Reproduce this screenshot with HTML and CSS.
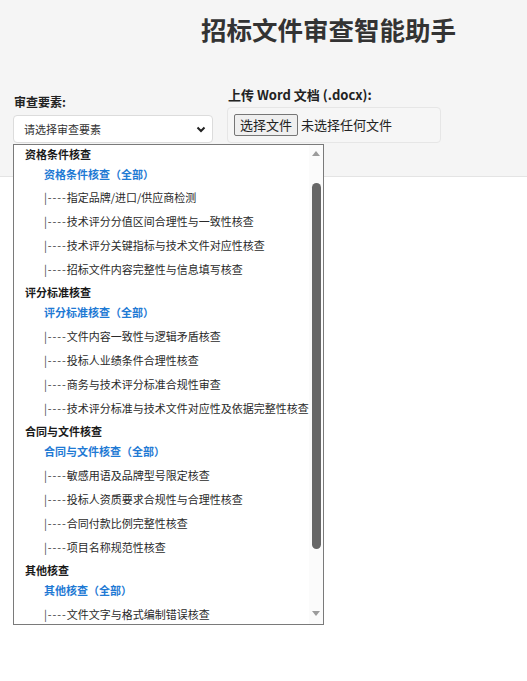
FILE: index.html
```html
<!DOCTYPE html>
<html lang="zh-CN">
<head>
<meta charset="utf-8">
<title>招标文件审查智能助手</title>
<link rel="stylesheet" href="styles.css">
</head>
<body>
<header class="top">
  <h1 class="title">招标文件审查智能助手</h1>
  <div class="controls">
    <div class="field field-select">
      <label class="label">审查要素:</label>
      <div class="select">
        <span class="select-text">请选择审查要素</span>
        <svg class="chev" width="10" height="7" viewBox="0 0 10 7"><path d="M1.5 1.5 L5 5 L8.5 1.5" fill="none" stroke="#222" stroke-width="2"/></svg>
      </div>
    </div>
    <div class="field field-file">
      <label class="label label-file">上传 Word 文档 (.docx):</label>
      <div class="filebox">
        <span class="filebtn">选择文件</span>
        <span class="filename">未选择任何文件</span>
      </div>
    </div>
  </div>
</header>

<div class="listbox">
  <div class="list">
    <div class="grp">资格条件核查</div>
    <div class="opt all">资格条件核查（全部）</div>
    <div class="opt"><span class="pre">|----</span>指定品牌/进口/供应商检测</div>
    <div class="opt"><span class="pre">|----</span>技术评分分值区间合理性与一致性核查</div>
    <div class="opt"><span class="pre">|----</span>技术评分关键指标与技术文件对应性核查</div>
    <div class="opt"><span class="pre">|----</span>招标文件内容完整性与信息填写核查</div>
    <div class="grp">评分标准核查</div>
    <div class="opt all">评分标准核查（全部）</div>
    <div class="opt"><span class="pre">|----</span>文件内容一致性与逻辑矛盾核查</div>
    <div class="opt"><span class="pre">|----</span>投标人业绩条件合理性核查</div>
    <div class="opt"><span class="pre">|----</span>商务与技术评分标准合规性审查</div>
    <div class="opt"><span class="pre">|----</span>技术评分标准与技术文件对应性及依据完整性核查</div>
    <div class="grp">合同与文件核查</div>
    <div class="opt all">合同与文件核查（全部）</div>
    <div class="opt"><span class="pre">|----</span>敏感用语及品牌型号限定核查</div>
    <div class="opt"><span class="pre">|----</span>投标人资质要求合规性与合理性核查</div>
    <div class="opt"><span class="pre">|----</span>合同付款比例完整性核查</div>
    <div class="opt"><span class="pre">|----</span>项目名称规范性核查</div>
    <div class="grp">其他核查</div>
    <div class="opt all">其他核查（全部）</div>
    <div class="opt"><span class="pre">|----</span>文件文字与格式编制错误核查</div>
  </div>
  <div class="scrollbar">
    <span class="arrow up"></span>
    <span class="thumb"></span>
    <span class="arrow down"></span>
  </div>
</div>
</body>
</html>
```
FILE: styles.css
```css
* { box-sizing: border-box; }
html, body { margin: 0; padding: 0; background: #fff; }
body {
  font-family: "Noto Sans CJK SC", "Noto Sans", "Liberation Sans", sans-serif;
  color: #222;
  position: relative;
  width: 527px;
  height: 681px;
  overflow: hidden;
}
.top {
  background: #f5f5f5;
  height: 177px;
  border-bottom: 1px solid #e4e4e4;
  padding-top: 13px;
}
.title {
  margin: 0;
  padding-left: 201px;
  font-size: 25.5px;
  line-height: 32px;
  font-weight: 700;
  color: #333;
}
.controls {
  display: flex;
  align-items: flex-end;
  gap: 14px;
  padding-left: 13px;
  margin-top: 42px;
}
.field { display: flex; flex-direction: column; }
.field-select { width: 200px; }
.field-file { width: 214px; }
.label {
  font-size: 12px;
  line-height: 16px;
  font-weight: 700;
  color: #222;
  padding-left: 1px;
  margin-bottom: 5px;
}
.label-file {
  font-size: 13px;
  margin-bottom: 4px;
}
.select {
  height: 28px;
  background: #fff;
  border: 1px solid #dcdcdc;
  border-radius: 4px;
  display: flex;
  align-items: center;
  justify-content: space-between;
  padding: 0 6px 0 10px;
}
.select-text { font-size: 11px; color: #333; line-height: 14px; }
.chev { display: block; }
.filebox {
  height: 36px;
  background: #f6f6f6;
  border: 1px solid #e6e6e6;
  border-radius: 4px;
  display: flex;
  align-items: center;
  padding-left: 6px;
  gap: 3px;
}
.filebtn {
  font-size: 13px;
  line-height: 20px;
  padding: 0 5px;
  background: #efefef;
  border: 1px solid #767676;
  border-radius: 2px;
  color: #222;
}
.filename { font-size: 13px; line-height: 20px; color: #222; }

.listbox {
  position: absolute;
  left: 13px;
  top: 144px;
  width: 311px;
  height: 481px;
  border: 1px solid #7a7a7a;
  background: #fff;
  overflow: hidden;
}
.list { margin-top: -2.5px; }
.grp {
  height: 20px;
  line-height: 22px;
  font-size: 11px;
  font-weight: 700;
  color: #1a1a1a;
  padding-left: 11px;
  white-space: nowrap;
}
.opt {
  height: 23.8px;
  line-height: 23.8px;
  font-size: 11px;
  color: #2a2a2a;
  padding-left: 30px;
  white-space: nowrap;
}
.pre { letter-spacing: 0.9px; color: #444; }
.opt.all { color: #1f7ad4; font-weight: 700; }
.scrollbar {
  position: absolute;
  top: 0;
  right: 0;
  bottom: 0;
  width: 14px;
  background: #fbfbfb;
}
.thumb {
  position: absolute;
  left: 3px;
  top: 38px;
  width: 9px;
  height: 366px;
  border-radius: 5px;
  background: #676767;
}
.arrow {
  position: absolute;
  left: 3px;
  width: 0;
  height: 0;
  border-left: 4.5px solid transparent;
  border-right: 4.5px solid transparent;
}
.arrow.up { top: 6px; border-bottom: 5px solid #9c9c9c; }
.arrow.down { bottom: 8px; border-top: 5px solid #9c9c9c; }
```
